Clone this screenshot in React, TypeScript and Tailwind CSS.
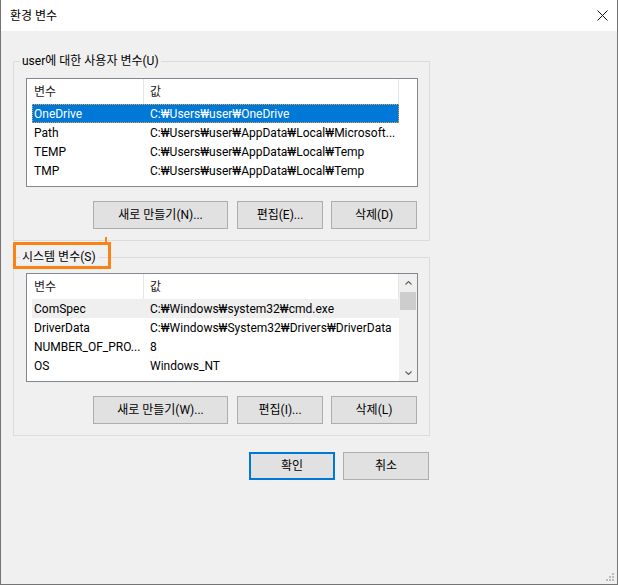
import React from "react";

type Item = { name: string; value: string; state?: "selected" | "hover" };

const userVars: Item[] = [
  { name: "OneDrive", value: "C:₩Users₩user₩OneDrive", state: "selected" },
  { name: "Path", value: "C:₩Users₩user₩AppData₩Local₩Microsoft..." },
  { name: "TEMP", value: "C:₩Users₩user₩AppData₩Local₩Temp" },
  { name: "TMP", value: "C:₩Users₩user₩AppData₩Local₩Temp" },
];

const sysVars: Item[] = [
  { name: "ComSpec", value: "C:₩Windows₩system32₩cmd.exe", state: "hover" },
  { name: "DriverData", value: "C:₩Windows₩System32₩Drivers₩DriverData" },
  { name: "NUMBER_OF_PRO...", value: "8" },
  { name: "OS", value: "Windows_NT" },
];

function Chevron({ up }: { up: boolean }) {
  return (
    <svg width="7" height="4" viewBox="0 0 7 4">
      <path
        d={up ? "M0.5 3.5 L3.5 0.5 L6.5 3.5" : "M0.5 0.5 L3.5 3.5 L6.5 0.5"}
        fill="none"
        stroke="#606060"
        strokeWidth="1.1"
      />
    </svg>
  );
}

function Scrollbar() {
  return (
    <div className="flex w-[18px] shrink-0 flex-col bg-[#f0f0f0]">
      <div className="flex h-[18px] items-center justify-center">
        <Chevron up />
      </div>
      <div className="ml-[1px] h-[18px] w-[16px] bg-[#cdcdcd]" />
      <div className="flex-1" />
      <div className="flex h-[17px] items-center justify-center">
        <Chevron up={false} />
      </div>
    </div>
  );
}

function ListView({ items, scroll }: { items: Item[]; scroll?: boolean }) {
  return (
    <div className="flex h-[109px] w-[392px] overflow-hidden border border-[#828790] bg-white">
      <div className="flex w-[372px] shrink-0 flex-col overflow-hidden">
        <div className="flex h-[25px] shrink-0 text-[#1a1a1a]">
          <div className="flex h-full w-[117px] items-center border-r border-[#e5e5e5] pl-[7px]">
            변수
          </div>
          <div className="flex h-full w-[255px] items-center border-r border-[#e5e5e5] pl-[6px]">
            값
          </div>
        </div>
        {items.map((it, i) => {
          const cls =
            it.state === "selected"
              ? "bg-[#0078d7] text-white outline-1 outline-dotted outline-[#f0a040] -outline-offset-1"
              : it.state === "hover"
              ? "bg-[#efefef] text-black"
              : "text-black";
          return (
            <div
              key={i}
              className={`ml-[5px] flex h-[19px] w-[367px] shrink-0 items-center whitespace-nowrap ${cls}`}
            >
              <div className="w-[118px] shrink-0 overflow-hidden pl-[2px]">{it.name}</div>
              <div className="w-[249px] overflow-hidden">{it.value}</div>
            </div>
          );
        })}
      </div>
      {scroll ? <Scrollbar /> : <div className="flex-1" />}
    </div>
  );
}

function Btn({ w, label, primary }: { w: string; label: string; primary?: boolean }) {
  return (
    <button
      className={`${w} flex h-[28px] shrink-0 items-center justify-center bg-[#e1e1e1] text-[12px] text-black ${
        primary ? "border-2 border-[#0078d7]" : "border border-[#adadad]"
      }`}
    >
      {label}
    </button>
  );
}

function Group({
  title,
  items,
  scroll,
  labels,
  pt,
}: {
  title: string;
  items: Item[];
  scroll?: boolean;
  labels: [string, string, string];
  pt: string;
}) {
  return (
    <fieldset className="w-[417px] border border-[#dcdcdc]">
      <legend className="ml-[6px] px-[2px] text-[12px] leading-[16px] text-black">{title}</legend>
      <div className={`pl-[12px] pb-[11px] ${pt}`}>
        <ListView items={items} scroll={scroll} />
        <div className="mt-[14px] flex w-[392px] justify-end pr-[1px]">
          <Btn w="w-[135px]" label={labels[0]} />
          <div className="w-[9px] shrink-0" />
          <Btn w="w-[86px]" label={labels[1]} />
          <div className="w-[8px] shrink-0" />
          <Btn w="w-[86px]" label={labels[2]} />
        </div>
      </div>
    </fieldset>
  );
}

export default function App() {
  return (
    <div className="relative flex h-[585px] w-[618px] flex-col overflow-hidden border-x border-b border-[#747474] bg-[#f0f0f0] font-['Roboto','Noto_Sans_CJK_KR',sans-serif] text-[12px] text-black">
      <div className="flex h-[31px] shrink-0 items-center justify-between bg-white pl-[9px] pr-[9px]">
        <span className="text-[12px] text-black">환경 변수</span>
        <svg width="11" height="11" viewBox="0 0 11 11">
          <path d="M0.5 0.5 L10.5 10.5 M10.5 0.5 L0.5 10.5" stroke="#111" strokeWidth="1" />
        </svg>
      </div>
      <div className="flex flex-col pl-[12px] pt-[22px]">
        <Group
          title="user에 대한 사용자 변수(U)"
          items={userVars}
          labels={["새로 만들기(N)...", "편집(E)...", "삭제(D)"]}
          pt="pt-[9px]"
        />
        <div className="h-[8px]" />
        <Group
          title="시스템 변수(S)"
          items={sysVars}
          scroll
          labels={["새로 만들기(W)...", "편집(I)...", "삭제(L)"]}
          pt="pt-[8px]"
        />
        <div className="mt-[16px] flex w-[417px] justify-end pr-[1px]">
          <Btn w="w-[86px]" label="확인" primary />
          <div className="w-[8px] shrink-0" />
          <Btn w="w-[86px]" label="취소" />
        </div>
      </div>

      {/* annotation highlight */}
      <div className="absolute left-[12px] top-[242px] h-[27px] w-[98px] border-[3px] border-[#fb8316]" />
      <div className="absolute left-[104px] top-[237px] h-[8px] w-[2px] bg-[#fb8316]" />

      {/* resize grip */}
      <svg className="absolute bottom-[3px] right-[3px]" width="8" height="8" viewBox="0 0 8 8">
        <rect x="6" y="0" width="2" height="2" fill="#bcbcbc" />
        <rect x="3" y="3" width="2" height="2" fill="#bcbcbc" />
        <rect x="6" y="3" width="2" height="2" fill="#bcbcbc" />
        <rect x="0" y="6" width="2" height="2" fill="#bcbcbc" />
        <rect x="3" y="6" width="2" height="2" fill="#bcbcbc" />
        <rect x="6" y="6" width="2" height="2" fill="#bcbcbc" />
      </svg>
    </div>
  );
}
